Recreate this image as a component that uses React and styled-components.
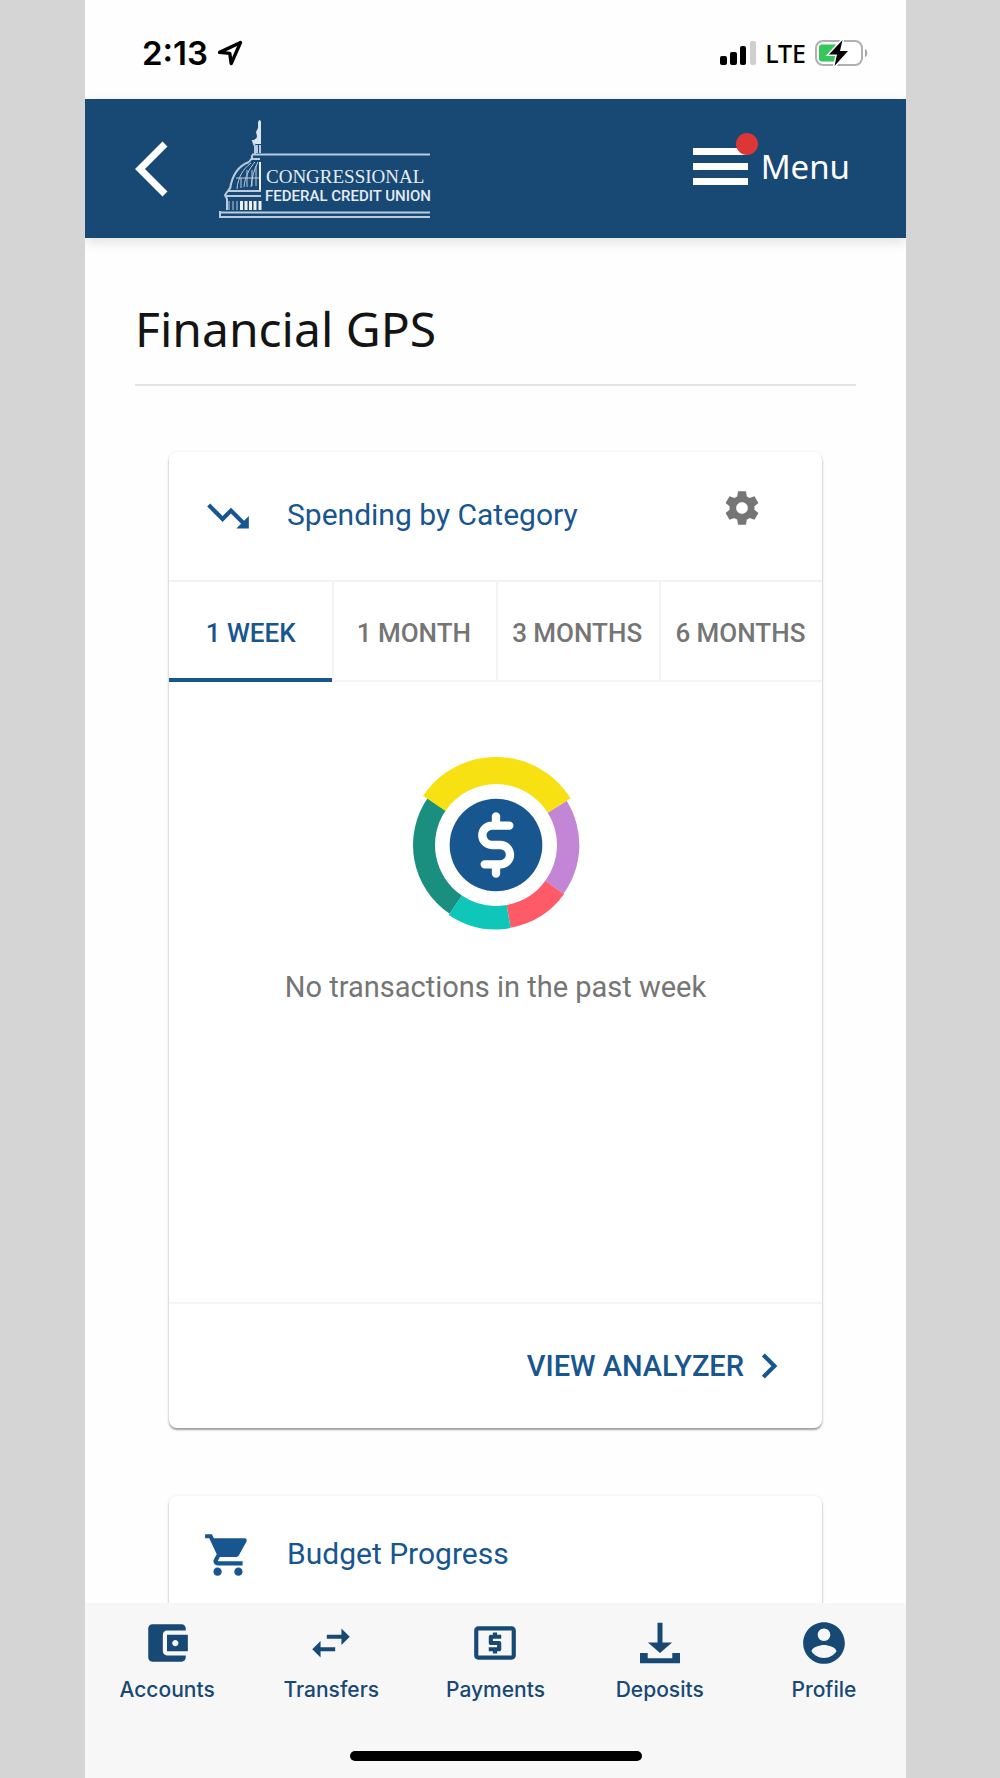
import React, { useState } from "react";
import styled, { createGlobalStyle } from "styled-components";

const blue = "#17568f";
const navy = "#184874";
const roboto = 'Roboto, "Liberation Sans", sans-serif';
const openSans = '"Noto Sans", "Open Sans", sans-serif';

const GlobalStyle = createGlobalStyle`
  * { box-sizing: border-box; }
  body { margin: 0; background: #d5d5d5; font-family: ${roboto}; }
  button { border: 0; padding: 0; background: none; font: inherit; color: inherit; cursor: pointer; }
  a { color: inherit; text-decoration: none; }
  h1, h2, p { margin: 0; font-weight: 400; }
  svg { display: block; flex: none; }
`;

const Backdrop = styled.div`
  height: 100vh;
  padding: 0 94px 0 85px;
`;

const Screen = styled.div`
  display: flex;
  flex-direction: column;
  height: 100%;
  overflow: hidden;
  background: #fefefe;
`;

const StatusBar = styled.div`
  flex: none;
  display: flex;
  align-items: center;
  justify-content: space-between;
  height: 99px;
  padding: 6px 38px 0 57px;
  color: #000;
`;

const StatusGroup = styled.div`
  display: flex;
  align-items: center;
  gap: 9px;
`;

const Clock = styled.span`
  font: 600 33px/40px Inter, sans-serif;
`;

const Network = styled.span`
  font: 500 25px/36px ${openSans};
`;

const AppHeader = styled.header`
  flex: none;
  display: flex;
  align-items: center;
  height: 139px;
  padding: 0 56px 0 50px;
  background: ${navy};
  color: #fff;
  box-shadow: 0 4px 12px rgba(0, 0, 0, 0.12);
  z-index: 1;
`;

const LogoLink = styled.a`
  margin-left: 50px;
`;

const MenuButton = styled.button`
  display: flex;
  align-items: center;
  gap: 13px;
  margin-left: auto;
  padding-bottom: 4px;
  font: 400 33px/48px ${openSans};
`;

const MenuIcon = styled.span`
  position: relative;
  display: flex;
  flex-direction: column;
  gap: 8px;
  width: 55px;
`;

const MenuBar = styled.span`
  height: 7px;
  background: #fff;
`;

const AlertDot = styled.span`
  position: absolute;
  top: -15px;
  right: -10px;
  width: 22px;
  height: 22px;
  border-radius: 50%;
  background: #dd3636;
`;

const Content = styled.main`
  flex: 1;
  min-height: 0;
  padding: 61px 50px 0;
  overflow-y: auto;
  scrollbar-width: none;
`;

const PageTitle = styled.h1`
  padding-bottom: 25px;
  border-bottom: 2px solid #e3e3e3;
  font: 400 48px/60px ${openSans};
  color: #141414;
`;

const CardList = styled.div`
  display: flex;
  flex-direction: column;
  gap: 68px;
  padding: 66px 34px 68px;
`;

const Card = styled.section`
  border-radius: 8px;
  background: #fff;
  box-shadow: 0 2px 2px rgba(0, 0, 0, 0.36), 0 0 4px rgba(0, 0, 0, 0.07);
`;

const CardHeader = styled.div`
  display: flex;
  align-items: center;
  height: ${(p) => (p.$compact ? "118px" : "128px")};
  padding: 0 60px 0 34px;
  color: ${blue};
`;

const CardTitle = styled.h2`
  flex: 1;
  margin-left: 34px;
  padding-bottom: 3px;
  font-size: 30px;
  line-height: 40px;
`;

const SettingsButton = styled.button`
  margin-bottom: 16px;
  color: #757575;
`;

const Tabs = styled.div`
  display: grid;
  grid-template-columns: repeat(4, 1fr);
  height: 102px;
  border-top: 2px solid #f2f2f2;
`;

const Tab = styled.button`
  padding-top: ${(p) => (p.$active ? "6px" : "4px")};
  border-bottom: ${(p) => (p.$active ? `4px solid ${blue}` : "2px solid #f4f4f4")};
  box-shadow: ${(p) => (p.$first ? "none" : "inset 2px 0 #f3f3f3")};
  color: ${(p) => (p.$active ? blue : "#757575")};
  font-size: 26px;
  font-weight: 500;
  line-height: 32px;
  white-space: nowrap;
`;

const EmptyState = styled.div`
  display: flex;
  flex-direction: column;
  align-items: center;
  gap: 34px;
  height: 620px;
  padding-top: 75px;
`;

const EmptyText = styled.p`
  font-size: 29px;
  line-height: 40px;
  color: #757575;
`;

const CardFooter = styled.div`
  display: flex;
  align-items: center;
  justify-content: flex-end;
  height: 126px;
  padding-right: 28px;
  border-top: 2px solid #f4f4f4;
`;

const FooterLink = styled.a`
  display: flex;
  align-items: center;
  font-size: 29px;
  font-weight: 500;
  line-height: 40px;
  color: ${blue};
`;

const BottomBar = styled.footer`
  flex: none;
  display: flex;
  flex-direction: column;
  align-items: center;
  justify-content: space-between;
  height: 175px;
  padding: 15px 0 17px;
  background: #f7f7f7;
`;

const BottomNav = styled.nav`
  display: grid;
  grid-template-columns: repeat(5, 1fr);
  width: 100%;
`;

const NavLink = styled.a`
  display: flex;
  flex-direction: column;
  align-items: center;
  gap: 8px;
  color: ${navy};
  font: 500 21px/28px Inter, sans-serif;
`;

const HomeIndicator = styled.div`
  width: 292px;
  height: 10px;
  border-radius: 5px;
  background: #000;
`;

const paths = {
  trendingDown: "M16 18l2.29-2.29-4.88-4.88-4 4L2 7.41 3.41 6l6 6 4-4 6.3 6.29L22 12v6z",
  cart: "M7 18c-1.1 0-1.99.9-1.99 2S5.9 22 7 22s2-.9 2-2-.9-2-2-2zM1 2v2h2l3.6 7.59-1.35 2.45c-.16.28-.25.61-.25.96 0 1.1.9 2 2 2h12v-2H7.42c-.14 0-.25-.11-.25-.25l.03-.12.9-1.63h7.45c.75 0 1.41-.41 1.75-1.03l3.58-6.49c.08-.14.12-.31.12-.48 0-.55-.45-1-1-1H5.21l-.94-2H1zm16 16c-1.1 0-1.99.9-1.99 2s.89 2 1.99 2 2-.9 2-2-.9-2-2-2z",
  settings: "M19.43 12.98c.04-.32.07-.64.07-.98s-.03-.66-.07-.98l2.11-1.65c.19-.15.24-.42.12-.64l-2-3.46c-.12-.22-.39-.3-.61-.22l-2.49 1c-.52-.4-1.08-.73-1.69-.98l-.38-2.65C14.46 2.18 14.25 2 14 2h-4c-.25 0-.46.18-.49.42l-.38 2.65c-.61.25-1.17.59-1.69.98l-2.49-1c-.23-.09-.49 0-.61.22l-2 3.46c-.13.22-.07.49.12.64l2.11 1.65c-.04.32-.07.65-.07.98s.03.66.07.98l-2.11 1.65c-.19.15-.24.42-.12.64l2 3.46c.12.22.39.3.61.22l2.49-1c.52.4 1.08.73 1.69.98l.38 2.65c.03.24.24.42.49.42h4c.25 0 .46-.18.49-.42l.38-2.65c.61-.25 1.17-.59 1.69-.98l2.49 1c.23.09.49 0 .61-.22l2-3.46c.12-.22.07-.49-.12-.64l-2.11-1.65zM12 15.5c-1.93 0-3.5-1.57-3.5-3.5s1.57-3.5 3.5-3.5 3.5 1.57 3.5 3.5-1.57 3.5-3.5 3.5z",
  chevronRight: "M10 6L8.59 7.41 13.17 12l-4.58 4.59L10 18l6-6z",
  wallet: "M21 18v1c0 1.1-.9 2-2 2H5c-1.11 0-2-.9-2-2V5c0-1.1.89-2 2-2h14c1.1 0 2 .9 2 2v1h-9c-1.11 0-2 .9-2 2v8c0 1.1.89 2 2 2h9zm-9-2h10V8H12v8zm4-2.5c-.83 0-1.5-.67-1.5-1.5s.67-1.5 1.5-1.5 1.5.67 1.5 1.5-.67 1.5-1.5 1.5z",
  transfers: "M6.99 11L3 15l3.99 4v-3H14v-2H6.99v-3zM21 9l-3.99-4v3H10v2h7.01v3L21 9z",
  payments: "M11 17h2v-1h1c.55 0 1-.45 1-1v-3c0-.55-.45-1-1-1h-3v-1h4V8h-2V7h-2v1h-1c-.55 0-1 .45-1 1v3c0 .55.45 1 1 1h3v1H9v2h2v1zm9-13H4c-1.11 0-1.99.89-1.99 2L2 18c0 1.11.89 2 2 2h16c1.11 0 2-.89 2-2V6c0-1.11-.89-2-2-2zm0 14H4V6h16v12z",
  deposits: "M10.8 2.3h2.4v9.5h4.6L12 16.8 6.2 11.8h4.6zM2.4 16.8h3.7v2.5h11.8v-2.5h3.7v4.9H2.4z",
  profile: "M12 2C6.48 2 2 6.48 2 12s4.48 10 10 10 10-4.48 10-10S17.52 2 12 2zm0 3c1.66 0 3 1.34 3 3s-1.34 3-3 3-3-1.34-3-3 1.34-3 3-3zm0 14.2c-2.5 0-4.71-1.28-6-3.22.03-1.99 4-3.08 6-3.08 1.99 0 5.97 1.09 6 3.08-1.29 1.94-3.5 3.22-6 3.22z",
};

function Icon({ name, size = 50 }) {
  return (
    <svg width={size} height={size} viewBox="0 0 24 24" fill="currentColor" aria-hidden="true">
      <path d={paths[name]} />
    </svg>
  );
}

function LocationArrow() {
  return (
    <svg width="26" height="26" viewBox="0 0 26 26" aria-hidden="true">
      <path d="M23.5 2.5L2.6 12.4l10.2 1 1.4 10.2z" fill="none" stroke="#000" strokeWidth="3.4" strokeLinejoin="round" />
    </svg>
  );
}

function Signal() {
  return (
    <svg width="36" height="24" viewBox="0 0 36 24" aria-hidden="true">
      <rect x="0" y="15" width="7" height="9" rx="2" />
      <rect x="10" y="11" width="7" height="13" rx="2" />
      <rect x="20" y="5" width="6" height="19" rx="2" />
      <rect x="30" y="0" width="6" height="24" rx="2" fill="#cfcfcf" />
    </svg>
  );
}

function Battery() {
  return (
    <svg width="53" height="28" viewBox="0 0 53 28" aria-hidden="true">
      <rect x="1" y="2" width="46" height="24" rx="7" fill="#fff" stroke="#b0b0b0" strokeWidth="2" />
      <path d="M7 5.500h15v17H7a3 3 0 0 1-3-3v-11a3 3 0 0 1 3-3z" fill="#34c759" />
      <path d="M50 10c3 1 3 7 0 8z" fill="#a5a5a5" />
      <path d="M27.500 1L14 15.500h8L19.500 27 33 12h-8z" fill="#000" stroke="#fff" strokeWidth="3" paintOrder="stroke" />
    </svg>
  );
}

function BackArrow() {
  return (
    <svg width="34" height="56" viewBox="0 0 34 56" aria-hidden="true">
      <path d="M30 3L5 28l25 25" fill="none" stroke="#fff" strokeWidth="7" />
    </svg>
  );
}

function Logo() {
  return (
    <svg width="212" height="98" viewBox="0 0 212 98" role="img" aria-label="Congressional Federal Credit Union">
      <g fill="none" stroke="#b9cbdc" strokeWidth="2">
        <path d="M33 34.500h178M1 92.500h210M0 97h211M1 91v6" />
        <path d="M40 21h-6l1 3 1 2v8M41 25v8M38 25v8" />
        <path d="M33 35v4h8M30 42c-11 4-17 14-19 27M33 38l-3 4M9 71h33M7 76h35M11 68l-5 7 2 4v11" />
        <path d="M32 43c-8 6-13 14-14 26M36 42c-6 7-10 15-11 25M39 42c-4 8-6 15-7 25M17 58h24M22 58v10M28 50v17M33 50v16M37 46v20" strokeWidth="1" />
      </g>
      <path d="M41 42v28" stroke="#e9f0f6" strokeWidth="2" />
      <path d="M39 2q2-4 3 0v22h-5q-4-1-3-4 4-1 4-4l-1-4 2-4z" fill="#dbe5ee" />
      <path d="M10 81v9M14 81v9M18 81v9" stroke="#b9cbdc" strokeWidth="1" />
      <path d="M22.500 81v9M27 81v9M31.500 81v9M36 81v9M41 81v9" stroke="#edf3f8" strokeWidth="3" />
      <text x="47" y="63" fill="#e4edf5" fontFamily="'Liberation Serif', serif" fontSize="19">CONGRESSIONAL</text>
      <text x="46" y="81" fill="#e4edf5" fontFamily="Roboto, sans-serif" fontSize="15" fontWeight="500">FEDERAL CREDIT UNION</text>
    </svg>
  );
}

const point = (r, deg) => {
  const a = (deg * Math.PI) / 180;
  return `${(r * Math.cos(a)).toFixed(1)} ${(r * Math.sin(a)).toFixed(1)}`;
};

const segments = [
  { from: -32, to: 36, outer: 250, color: "#c385d6" },
  { from: 36, to: 80, outer: 252, color: "#ff5a68" },
  { from: 80, to: 124, outer: 253, color: "#0fc7b8" },
  { from: 124, to: 215, outer: 249, color: "#1a8f80" },
  { from: 214, to: 328, outer: 264, color: "#f8e112" },
];

function SpendingRing() {
  return (
    <svg width="176" height="176" viewBox="-264 -264 528 528" aria-hidden="true">
      {segments.map((s) => (
        <path
          key={s.color}
          fill={s.color}
          d={`M${point(s.outer, s.from)}A${s.outer} ${s.outer} 0 0 1 ${point(s.outer, s.to)}L${point(183, s.to)}A183 183 0 0 0 ${point(183, s.from)}z`}
        />
      ))}
      <circle r="139" fill={blue} />
      <path
        d="M0-86v28M40-58H-12a29 29 0 0 0 0 58H13a29 29 0 0 1 0 58H-34M0 58v28"
        fill="none"
        stroke="#fff"
        strokeWidth="25"
        strokeLinecap="round"
      />
    </svg>
  );
}

const periods = ["1 WEEK", "1 MONTH", "3 MONTHS", "6 MONTHS"];

const navItems = [
  { icon: "wallet", label: "Accounts" },
  { icon: "transfers", label: "Transfers" },
  { icon: "payments", label: "Payments" },
  { icon: "deposits", label: "Deposits" },
  { icon: "profile", label: "Profile" },
];

export default function App() {
  const [period, setPeriod] = useState(periods[0]);

  return (
    <>
      <GlobalStyle />
      <Backdrop>
        <Screen>
          <StatusBar>
            <StatusGroup>
              <Clock>2:13</Clock>
              <LocationArrow />
            </StatusGroup>
            <StatusGroup>
              <Signal />
              <Network>LTE</Network>
              <Battery />
            </StatusGroup>
          </StatusBar>

          <AppHeader>
            <button type="button" aria-label="Back">
              <BackArrow />
            </button>
            <LogoLink href="#home">
              <Logo />
            </LogoLink>
            <MenuButton type="button">
              <MenuIcon>
                <MenuBar />
                <MenuBar />
                <MenuBar />
                <AlertDot />
              </MenuIcon>
              Menu
            </MenuButton>
          </AppHeader>

          <Content>
            <PageTitle>Financial GPS</PageTitle>
            <CardList>
              <Card>
                <CardHeader>
                  <Icon name="trendingDown" />
                  <CardTitle>Spending by Category</CardTitle>
                  <SettingsButton type="button" aria-label="Settings">
                    <Icon name="settings" size={40} />
                  </SettingsButton>
                </CardHeader>
                <Tabs role="tablist">
                  {periods.map((p, i) => (
                    <Tab
                      key={p}
                      type="button"
                      role="tab"
                      aria-selected={p === period}
                      $active={p === period}
                      $first={i === 0}
                      onClick={() => setPeriod(p)}
                    >
                      {p}
                    </Tab>
                  ))}
                </Tabs>
                <EmptyState>
                  <SpendingRing />
                  <EmptyText>No transactions in the past week</EmptyText>
                </EmptyState>
                <CardFooter>
                  <FooterLink href="#analyzer">
                    VIEW ANALYZER
                    <Icon name="chevronRight" />
                  </FooterLink>
                </CardFooter>
              </Card>
              <Card>
                <CardHeader $compact>
                  <Icon name="cart" />
                  <CardTitle>Budget Progress</CardTitle>
                </CardHeader>
              </Card>
            </CardList>
          </Content>

          <BottomBar>
            <BottomNav>
              {navItems.map((item) => (
                <NavLink key={item.label} href={`#${item.icon}`}>
                  <Icon name={item.icon} />
                  {item.label}
                </NavLink>
              ))}
            </BottomNav>
            <HomeIndicator />
          </BottomBar>
        </Screen>
      </Backdrop>
    </>
  );
}
